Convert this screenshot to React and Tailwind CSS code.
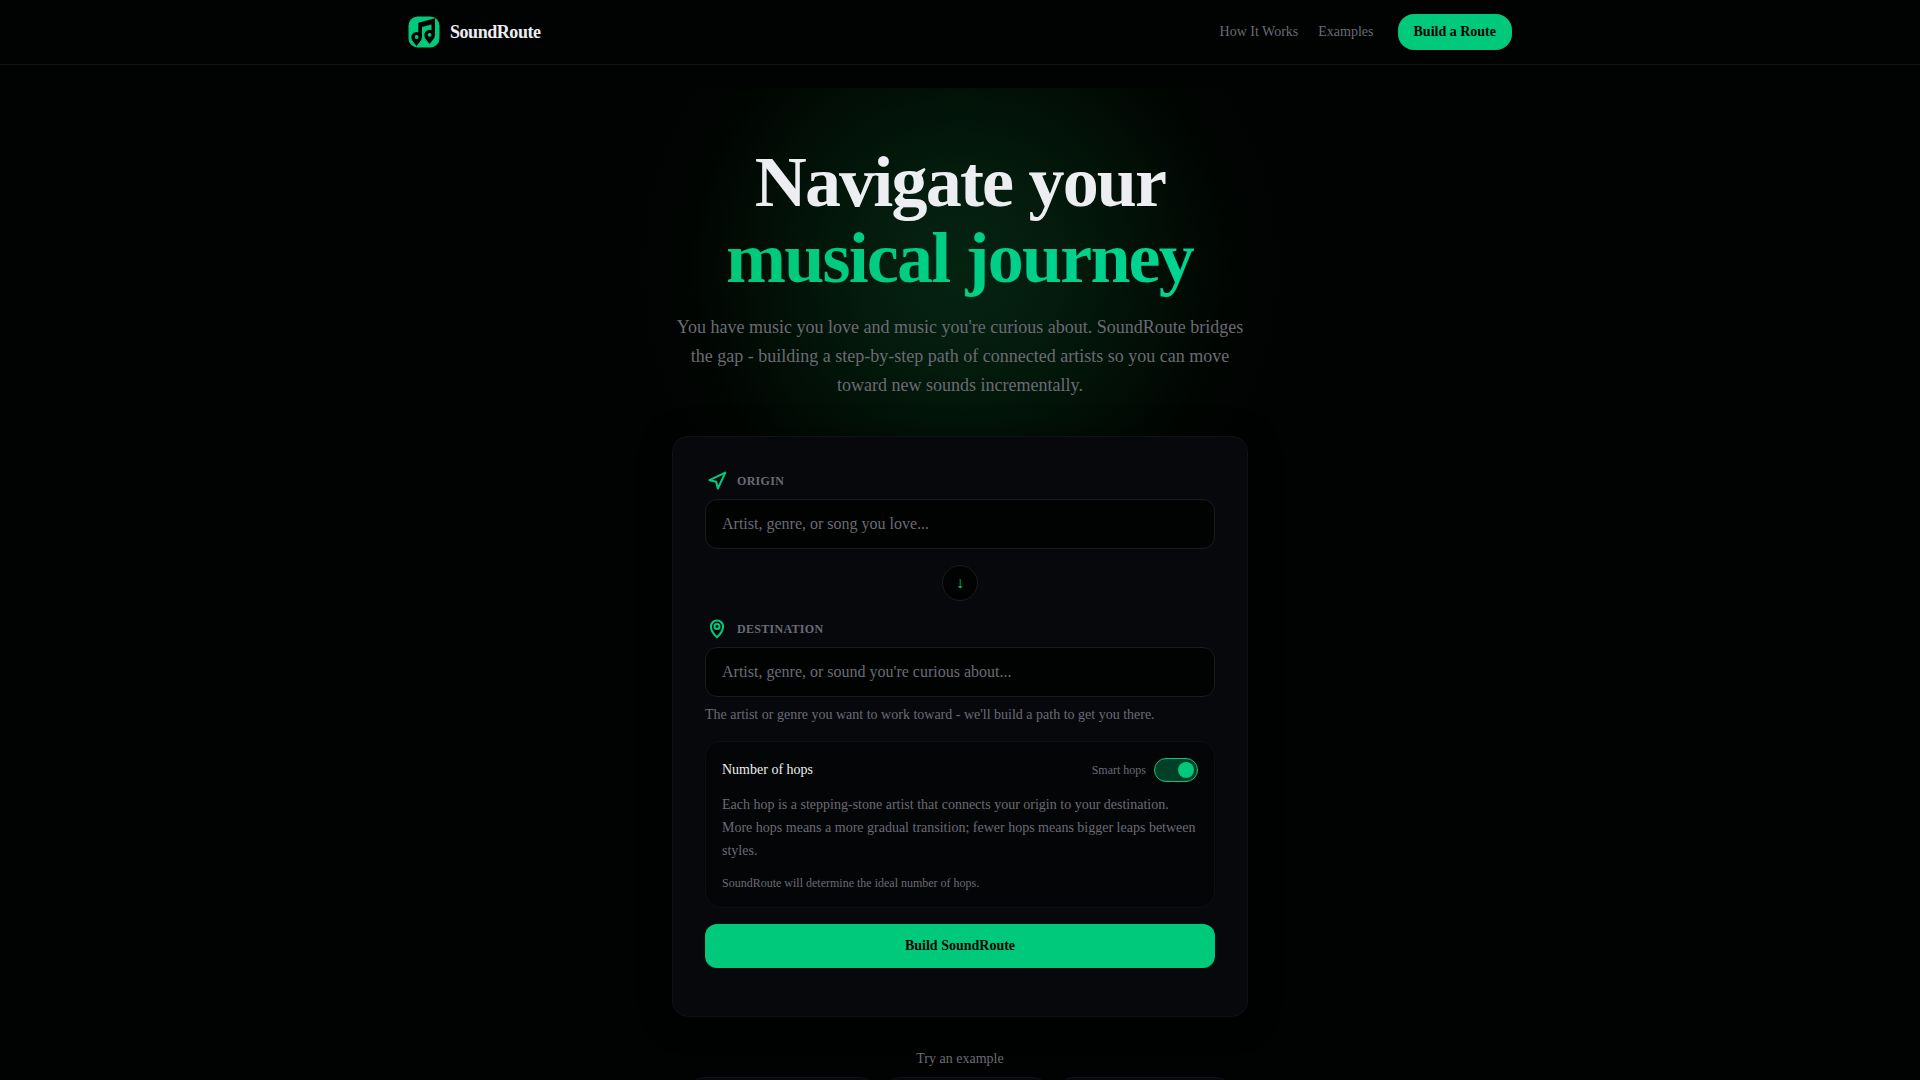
import { useState } from 'react';

const EXAMPLES = ['Fleetwood Mac → Metallica', 'Taylor Swift → Coltrane', 'Radiohead → Miles Davis'];

function Logo() {
  return (
    <svg viewBox="0 0 32 32" className="size-8" aria-hidden="true">
      <rect x="0.5" y="0.5" width="31" height="31" rx="9" fill="#00c97b" />
      <path d="M10.300 6.700L27 2.300V19h-3.500V8.400l-9.500 2.700V21h-3.700z" fill="#010202" />
      <path d="M8.600 15.900a5.300 5.300 0 0 1 5.300 5.200c0 3.500-3.300 6.100-5.300 9.200c-2-3.100-5.300-5.700-5.300-9.200a5.300 5.300 0 0 1 5.300-5.200z" fill="#010202" />
      <path d="M21.600 13.700a5.300 5.300 0 0 1 5.300 5.200c0 3.500-3.300 6.100-5.300 9.200c-2-3.100-5.300-5.700-5.300-9.200a5.300 5.300 0 0 1 5.300-5.200z" fill="#010202" />
      <circle cx="8.600" cy="21" r="1.900" fill="#00c97b" />
      <circle cx="21.600" cy="18.800" r="1.900" fill="#00c97b" />
    </svg>
  );
}

function OriginIcon() {
  return (
    <svg viewBox="0 0 24 24" className="size-5" fill="none" stroke="currentColor" strokeWidth="2.5" strokeLinecap="round" strokeLinejoin="round" aria-hidden="true">
      <path d="M3 11L22 2l-9 19-2-8-8-2z" />
    </svg>
  );
}

function DestinationIcon() {
  return (
    <svg viewBox="0 0 24 24" className="size-5" fill="none" stroke="currentColor" strokeWidth="2.5" strokeLinecap="round" strokeLinejoin="round" aria-hidden="true">
      <path d="M12 22s7.300-6.700 7.300-13A7.300 7.300 0 0 0 4.700 9c0 6.300 7.300 13 7.300 13z" />
      <circle cx="12" cy="9" r="3" />
    </svg>
  );
}

function Header() {
  return (
    <header className="border-b border-[#121314] bg-[#010202]">
      <div className="mx-auto flex h-16 max-w-6xl items-center justify-between px-6">
        <a href="#" className="flex items-center gap-2.5">
          <Logo />
          <span className="text-lg font-bold tracking-tight">SoundRoute</span>
        </a>
        <nav className="flex items-center gap-5 text-sm text-[#6b6b74]">
          <a href="#how-it-works">How It Works</a>
          <a href="#examples">Examples</a>
          <a href="#build" className="ml-1 flex h-9 items-center rounded-2xl bg-[#00c97b] px-4 font-bold text-[#010202]">
            Build a Route
          </a>
        </nav>
      </div>
    </header>
  );
}

function Field({ id, label, icon: Icon, placeholder }) {
  return (
    <div>
      <label htmlFor={id} className="mb-1.5 flex h-6 items-center gap-2 text-xs font-bold tracking-wide text-[#6b6b74] uppercase">
        <span className="flex size-6 items-center justify-center text-[#00c97b]">
          <Icon />
        </span>
        {label}
      </label>
      <input
        id={id}
        type="text"
        placeholder={placeholder}
        className="h-[50px] w-full rounded-xl border border-[#1a1b1f] bg-[#010202] px-4 text-base placeholder:text-[#6b6b74] focus:outline-none"
      />
    </div>
  );
}

function HopsPanel() {
  const [smart, setSmart] = useState(true);

  return (
    <div className="mt-4 rounded-2xl border border-[#0e0f12] bg-[#040507] p-4">
      <div className="flex items-center justify-between">
        <span className="text-sm">Number of hops</span>
        <label className="flex items-center gap-2 text-xs text-[#6b6b74]">
          Smart hops
          <input
            type="checkbox"
            role="switch"
            checked={smart}
            onChange={(e) => setSmart(e.target.checked)}
            className="h-6 w-11 appearance-none rounded-full border border-[#1a1b1f] p-[3px] before:block before:size-4 before:rounded-full before:bg-[#6b6b74] checked:border-[#00c97b] checked:bg-[#023f28] checked:before:translate-x-5 checked:before:bg-[#00c97b]"
          />
        </label>
      </div>
      <p className="mt-[11px] text-sm leading-[23px] text-[#6b6b74]">
        Each hop is a stepping-stone artist that connects your origin to your destination. More hops means a more gradual
        transition; fewer hops means bigger leaps between styles.
      </p>
      <p className="mt-[13px] text-xs text-[#6b6b74]">SoundRoute will determine the ideal number of hops.</p>
    </div>
  );
}

export default function App() {
  return (
    <div className="min-h-screen bg-[#010202] font-['Liberation_Serif',serif] text-[#eceef2]">
      <Header />
      <main className="relative isolate mx-auto mt-[23px] flex flex-col items-center px-6 pt-14 pb-16">
        <div className="absolute inset-x-0 top-0 -z-10 h-[540px] bg-[radial-gradient(circle_360px_at_50%_180px,#052311_0%,#041c0e_25%,#021208_48%,#010502_75%,#010202_100%)]" />
        <h1 className="text-center text-7xl leading-[76px] font-bold tracking-tight">
          Navigate your
          <br />
          <span className="bg-linear-to-r from-[#00c97b] to-[#00d492] bg-clip-text pr-px text-transparent">musical journey</span>
        </h1>
        <p className="mt-[17px] max-w-xl text-center text-lg leading-[29px] text-[#6b6b74]">
          You have music you love and music you're curious about. SoundRoute bridges the gap - building a step-by-step path
          of connected artists so you can move toward new sounds incrementally.
        </p>

        <form
          id="build"
          onSubmit={(e) => e.preventDefault()}
          className="mt-9 w-full max-w-xl rounded-2xl border border-[#111216] bg-[#07080c] px-8 pt-8 pb-12 shadow-[0_4px_32px_rgba(0,0,0,0.4)]"
        >
          <Field id="origin" label="Origin" icon={OriginIcon} placeholder="Artist, genre, or song you love..." />
          <div className="mx-auto my-4 flex size-9 items-center justify-center rounded-full border border-[#1a1b1f] bg-[#010202] text-base text-[#00c97b]">
            ↓
          </div>
          <Field id="destination" label="Destination" icon={DestinationIcon} placeholder="Artist, genre, or sound you're curious about..." />
          <p className="mt-2 text-sm text-[#6b6b74]">
            The artist or genre you want to work toward - we'll build a path to get you there.
          </p>
          <HopsPanel />
          <button type="submit" className="mt-4 h-11 w-full rounded-xl bg-[#00c97b] text-sm font-bold text-[#010202]">
            Build SoundRoute
          </button>
        </form>

        <p className="mt-8 text-sm text-[#6b6b74]">Try an example</p>
        <div id="examples" className="mt-2 flex gap-2">
          {EXAMPLES.map((name) => (
            <button key={name} type="button" className="h-9 rounded-2xl border border-[#111216] bg-[#07080c] px-3 text-sm text-[#6b6b74]">
              {name}
            </button>
          ))}
        </div>
      </main>
    </div>
  );
}
